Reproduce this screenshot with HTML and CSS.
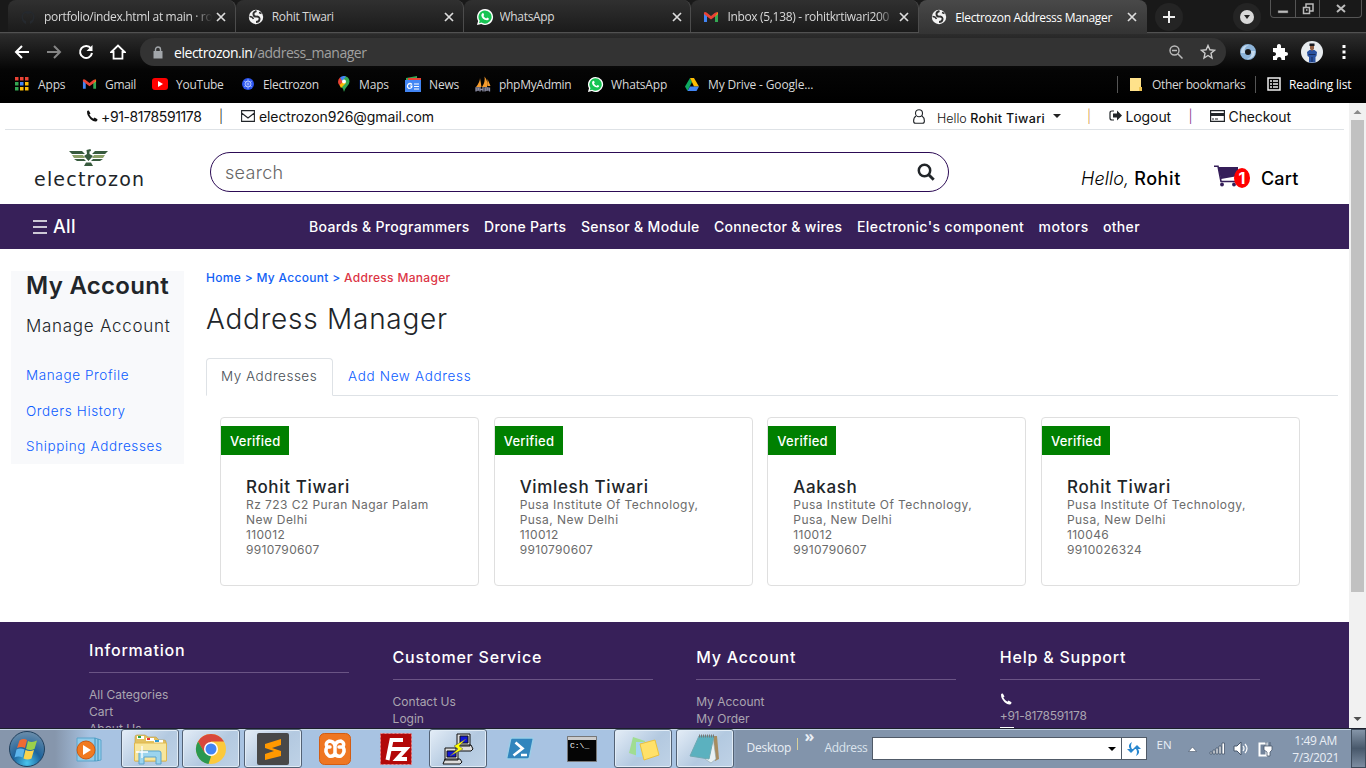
FILE: index.html
```html
<!DOCTYPE html>
<html lang="en">
<head>
<meta charset="utf-8">
<title>Electrozon Addresss Manager</title>
<link rel="stylesheet" href="styles.css">
</head>
<body>
<svg class="defs" width="0" height="0">
  <symbol id="x" viewBox="0 0 10 10"><path d="M1 1l8 8M9 1L1 9" stroke="currentColor" stroke-width="1.7"/></symbol>
  <symbol id="globe" viewBox="0 0 16 16"><circle cx="8" cy="8" r="7.2" fill="#f4f4f4"/><path d="M8.500 2Q5 3 5.500 5.500T9 7.500q3 .5 2.500 3T8 13" fill="none" stroke="#303030" stroke-width="1.900"/><path d="M1.500 7.500q3 0 4 2.500M11 3.500l2.500 1" fill="none" stroke="#303030" stroke-width="1.500"/></symbol>
  <symbol id="wa" viewBox="0 0 18 18"><path d="M9 1a8 8 0 1 1-3.800 15L1 17l1.100-4A8 8 0 0 1 9 1z" fill="#fff"/><path d="M9 2.400a6.600 6.600 0 1 1-3.500 12.200l-2.500.6.7-2.400A6.600 6.600 0 0 1 9 2.400z" fill="#17c453"/><path d="M6.500 5l1 .2.700 1.800-.8 1q1 1.900 2.800 2.500l1-1 1.700.9q0 1.800-2 1.900Q6 11.600 5.300 7.500q0-1.500 1.200-2.500z" fill="#fff"/></symbol>
  <symbol id="gmail" viewBox="0 0 16 12"><path d="M1 11V2l3 2.300V11z" fill="#4285f4"/><path d="M15 11V2l-3 2.300V11z" fill="#34a853"/><path d="M12 4.300L14.200 1q1 .5.800 2L12 5.500z" fill="#fbbc04"/><path d="M1 1.500Q2 .5 3.500 1.500L8 5l4-3.200q2-1 3 0L12 5.500 8 8.500 4 5.500 1 3z" fill="#ea4335"/></symbol>
  <symbol id="phone" viewBox="0 0 12 12"><path d="M1 1.500Q1 .5 2.800.500L4.500 3.500 3.300 4.600Q4.700 7.500 7.400 8.700L8.500 7.500l3 1.700q0 1.800-1.300 2.200-2.200.700-5.600-2.200Q1 5.600 1 1.500z" fill="currentColor"/></symbol>
  <symbol id="search" viewBox="0 0 18 18"><circle cx="7.500" cy="7.500" r="5.700" fill="none" stroke="currentColor" stroke-width="2.500"/><path d="M11.700 11.700l5 5" stroke="currentColor" stroke-width="2.900"/></symbol>
</svg>

<header class="chrome">
  <div class="tabstrip">
    <div class="tab"><svg class="fav dim" viewBox="0 0 16 16"><path d="M6 15q-5-2-4.500-8.500Q3 2 8 2t6.500 4.500Q15 13 10 15v-3q3-.5 3-4t-2-4L8 5 5 4Q3 5 3 8t3 4z" fill="currentColor"/></svg><span class="title fade">portfolio/index.html at main · ro</span><svg class="close"><use href="#x"/></svg></div>
    <div class="tab"><svg class="fav"><use href="#globe"/></svg><span class="title">Rohit Tiwari</span><svg class="close"><use href="#x"/></svg></div>
    <div class="tab"><svg class="fav big"><use href="#wa"/></svg><span class="title">WhatsApp</span><svg class="close"><use href="#x"/></svg></div>
    <div class="tab"><svg class="fav"><use href="#gmail"/></svg><span class="title fade inbox">Inbox (5,138) - rohitkrtiwari200</span><svg class="close"><use href="#x"/></svg></div>
    <div class="tab active"><svg class="fav"><use href="#globe"/></svg><span class="title">Electrozon Addresss Manager</span><svg class="close"><use href="#x"/></svg></div>
    <div class="round newtab"><svg width="14" height="14"><path d="M7 1v12M1 7h12" stroke="#eee" stroke-width="2"/></svg></div>
    <div class="round tabsearch"><svg width="14" height="14"><circle cx="7" cy="7" r="7" fill="#d9d9d9"/><path d="M4 5h6l-3 4z" fill="#222"/></svg></div>
    <div class="winctl">
      <span><svg width="12" height="14"><path d="M1 8.500h10v2.500H1z" fill="#bbb" stroke="#555" stroke-width=".5"/></svg></span>
      <span><svg width="12" height="12"><path d="M4 4V1h7v7H8M1.500 4.500h6v6h-6zM4 7h1.500" fill="none" stroke="#bbb" stroke-width="1.500"/></svg></span>
      <span class="wx"><svg width="10" height="9"><path d="M1 1l8 7M9 1L1 8" stroke="#bbb" stroke-width="2"/></svg></span>
    </div>
  </div>
  <div class="toolbar">
    <svg class="tb" viewBox="0 0 16 16"><path d="M15 8H2M8 2L2 8l6 6" fill="none" stroke="#fff" stroke-width="2"/></svg>
    <svg class="tb" viewBox="0 0 16 16"><path d="M1 8h13M8 2l6 6-6 6" fill="none" stroke="#858585" stroke-width="2"/></svg>
    <svg class="tb" viewBox="0 0 16 16"><path d="M13 4.500A6 6 0 1 0 14 9" fill="none" stroke="#fff" stroke-width="2"/><path d="M14.500 1v6h-6z" fill="#fff"/></svg>
    <svg class="tb" viewBox="0 0 18 18"><path d="M1.500 9L9 1.800 16.500 9H14v7.500H4V9z" fill="none" stroke="#fff" stroke-width="2"/></svg>
    <div class="omni">
      <svg width="10" height="13" viewBox="0 0 10 13"><path d="M.5 5h9v7.500h-9z" fill="#a2a6aa"/><path d="M2.500 6V3.500a2.500 2.500 0 0 1 5 0V6" fill="none" stroke="#a2a6aa" stroke-width="1.400"/></svg>
      <span class="url"><b>electrozon.in</b>/address_manager</span>
      <svg class="mag" width="14" height="14" viewBox="0 0 14 14"><circle cx="5.500" cy="5.500" r="4.500" fill="none" stroke="#bbb" stroke-width="1.400"/><path d="M3 5.500h5M9 9l4.500 4.500" stroke="#bbb" stroke-width="1.500"/></svg>
      <svg width="16" height="16" viewBox="0 0 16 16"><path d="M8 1.500l1.900 4.300 4.600.5L11 9.300l1 4.700-4-2.500L4 14l1-4.700L1.500 6.300l4.600-.5z" fill="none" stroke="#ccc" stroke-width="1.400"/></svg>
    </div>
    <svg class="ext" width="16" height="16"><circle cx="8" cy="8" r="5.500" fill="none" stroke="#8db4d9" stroke-width="5"/><path d="M1 9Q1 1 9 1q-6 2-4 8M15 7q0 8-8 8 6-2 4-8" fill="#dce9f6" opacity=".7"/></svg>
    <svg class="puz" width="16" height="16"><path d="M1 4h4Q4.500 0 7 0t2 4h4v4q3-.5 3 1.800T13 12v4H9.500q0-3-2.300-3T5 16H1v-4q3 0 3-2T1 8z" fill="#fff"/></svg>
    <svg class="avatar" width="22" height="22"><circle cx="11" cy="11" r="11" fill="#e8ecef"/><path d="M6.500 15L6 11l2.500-2h5l2.500 2-.5 4-1 1v5.500H8V16z" fill="#2a52a0"/><path d="M9 4h4v4l-2 2-2-2z" fill="#936044"/><path d="M8.500 5V2.500h5V5z" fill="#17191f"/><path d="M7.500 13.500h7M11 16v5" stroke="#172b58"/></svg>
    <svg class="dots" width="4" height="14"><path d="M.5 0h3v3h-3zM.5 5.500h3v3h-3zM.5 11h3v3h-3z" fill="#fff"/></svg>
  </div>
  <div class="bookmarks">
    <div class="bm b1"><svg width="14" height="14"><path d="M0 0h3.500v3.500H0zM5 0h3.500v3.500H5zM10 0h3.500v3.500H10z" fill="#ea4335"/><path d="M0 5h3.500v3.500H0zM0 10h3.500v3.500H0z" fill="#34a853"/><path d="M5 5h3.500v3.500H5z" fill="#4285f4"/><path d="M5 10h3.500v3.500H5zM10 5h3.500v3.500H10zM10 10h3.500v3.500H10z" fill="#fbbc04"/></svg>Apps</div>
    <div class="bm b2"><svg width="15" height="12"><use href="#gmail"/></svg>Gmail</div>
    <div class="bm b3"><svg width="16" height="12"><rect width="16" height="12" rx="3" fill="red"/><path d="M6 3l5 3-5 3z" fill="#fff"/></svg>YouTube</div>
    <div class="bm b4"><svg width="12" height="12"><circle cx="6" cy="6" r="6" fill="#2c55ef"/><circle cx="6" cy="6" r="3" fill="none" stroke="#b9cbff"/><path d="M2 3l8 6M2 9l8-6M6 1v10" stroke="#a9bfff" stroke-width=".7"/></svg>Electrozon</div>
    <div class="bm b5"><svg width="12" height="16"><path d="M6 0a5.500 5.500 0 0 1 5.500 5.500Q11.500 8 9 10.500 7 12.500 6 16 5.500 12.500 2.500 10z" fill="#34a853"/><path d="M0 6a6 6 0 0 1 2-4.500L6 6 2 9.500Q0 8 0 6z" fill="#ea4335"/><path d="M2 1.500A6 6 0 0 1 8 .4L4 5z" fill="#4285f4"/><path d="M1.500 9L6 5l2 2-5 5z" fill="#fbbc04"/><circle cx="6" cy="5.500" r="2" fill="#fff"/></svg>Maps</div>
    <div class="bm b6"><svg width="16" height="16"><path d="M1 2l11-2v5H1z" fill="#34a853"/><path d="M3 2h13v4H3z" fill="#ea4335"/><path d="M0 4h16v12H0z" fill="#4285f4"/><path d="M7 8.500Q5 6.500 3 8.500 1.500 11 4 12.500q3 0 3-2.500H5M9 8h5M9 10.500h5M9 13h5" fill="none" stroke="#fff" stroke-width="1.200"/></svg>News</div>
    <div class="bm b7"><svg width="16" height="16"><path d="M1 11Q5 6 5 2l1.500 9zM7 11q3.500-5 2.500-10.500 4 5 2.500 10.500zM12.500 10V3l3 7z" fill="#f49b2d"/><path d="M1 15.500V12h2.500v2H1M5 15.500V11v2.500h3V11v4.500M10 15.500V12h3v2h-3M14.500 15.500v-4" fill="none" stroke="#8d8ea6" stroke-width="1.300"/></svg>phpMyAdmin</div>
    <div class="bm b8"><svg width="17" height="17"><use href="#wa"/></svg>WhatsApp</div>
    <div class="bm b9"><svg width="14" height="13"><path d="M5 0L0 8.500 2.500 13 7 4z" fill="#0ea960"/><path d="M5 0h4l5 8.500H9z" fill="#fbbc04"/><path d="M5 8.500h9L11.500 13h-9z" fill="#4285f4"/></svg>My Drive - Google...</div>
    <div class="bm b10"><svg width="12" height="15"><path d="M0 1h11v9.500L12 14H0z" fill="#ffe28b"/><path d="M9 10h3v4H9z" fill="#efc451"/></svg>Other bookmarks</div>
    <div class="bm b11"><svg width="14" height="14"><path d="M1 1h12v12H1z" fill="none" stroke="#eee" stroke-width="1.500"/><path d="M3 4h2M6 4h5M3 7h2M6 7h5M3 10h2M6 10h5" stroke="#eee" stroke-width="1.400"/></svg>Reading list</div>
  </div>
</header>

<div class="viewport">
  <div class="site">
    <div class="topbar">
      <svg class="ic ph"><use href="#phone"/></svg><span class="tphone">+91-8178591178</span><span class="bar1">|</span>
      <svg class="env" width="14" height="12"><path d="M.6.600h12.800v10.800H.600zM.6 3l6.400 5 6.400-5" fill="none" stroke="#212529" stroke-width="1.100"/></svg><span class="tmail">electrozon926@gmail.com</span>
      <svg class="usr" width="12" height="15"><path d="M3 7Q.6 8.500.600 12q0 2.300 2 2.300h6.800q2 0 2-2.300 0-3.500-2.400-5" fill="none" stroke="#212529" stroke-width="1.100"/><circle cx="6" cy="4.200" r="3.500" fill="none" stroke="#212529" stroke-width="1.100"/></svg>
      <span class="thello">Hello <b>Rohit Tiwari</b></span><i class="caret"></i><span class="bar2">|</span>
      <svg class="out" width="13" height="12"><path d="M5 1H3Q1 1 1 3v5q0 2 2 2h2" fill="none" stroke="#212529" stroke-width="1.200"/><path d="M4 3.500h4V.5l5 5L8 10.500v-3H4z" fill="#212529"/></svg><span class="tlog">Logout</span><span class="bar3">|</span>
      <svg class="card-i" width="15" height="12"><path d="M.6.600h13.800v10.800H.600z" fill="none" stroke="#212529" stroke-width="1.200"/><path d="M0 3h15v3H0zM2 8.500h2v1H2zM5 8.500h3v1H5z" fill="#212529"/></svg><span class="tcheck">Checkout</span>
    </div>
    <div class="brandrow">
      <div class="logo">
        <svg width="39" height="18" viewBox="0 0 39 18"><path d="M0 2h13l3 3h-13zM39 2H26l-3 3h13zM5 10h10l2 2H8zM34 10H24l-2 2h9zM17.500 1l4-1 .5 2-1.500.5V5L24 7l-4.500 5L15 7l3-2zM17 13.500h5l2 3.500h-9z" fill="#375a3d"/><path d="M3 6h11l2 3H5zM36 6H25l-2 3h11z" fill="#8ba068"/></svg>
        <span>electrozon</span>
      </div>
      <div class="searchbox"><span>search</span><svg width="18" height="18"><use href="#search"/></svg></div>
      <span class="hello"><i>Hello,</i> <b>Rohit</b></span>
      <div class="cart"><svg width="24" height="22"><path d="M4 2h20v9L7 14z" fill="#351e59"/><path d="M0 1.200h4l3 15.300h16" fill="none" stroke="#351e59" stroke-width="1.600"/><circle cx="8" cy="19.500" r="1.900" fill="#351e59"/><circle cx="20" cy="19.500" r="1.900" fill="#351e59"/></svg><span class="count">1</span></div>
      <b class="cartlabel">Cart</b>
    </div>
    <nav class="nav"><div class="all"><svg width="14" height="14"><path d="M0 1h14M0 7h14M0 13h14" stroke="#fff" stroke-width="1.300"/></svg><span>All</span></div>
      <a class="n1">Boards &amp; Programmers</a><a class="n2">Drone Parts</a><a class="n3">Sensor &amp; Module</a><a class="n4">Connector &amp; wires</a><a class="n5">Electronic's component</a><a class="n6">motors</a><a class="n7">other</a></nav>
    <div class="content">
      <aside class="side"><h2>My Account</h2><h4>Manage Account</h4><a class="s1">Manage Profile</a><a class="s2">Orders History</a><a class="s3">Shipping Addresses</a></aside>
      <main class="main">
        <div class="crumb">Home &gt; My Account &gt; <span>Address Manager</span></div>
        <h1>Address Manager</h1>
        <div class="tabs"><div class="on"><span>My Addresses</span></div><a>Add New Address</a></div>
        <div class="cards">
          <article><span class="badge">Verified</span><h3>Rohit Tiwari</h3><p>Rz 723 C2 Puran Nagar Palam</p><p>New Delhi</p><p class="num">110012</p><p class="num">9910790607</p></article>
          <article><span class="badge">Verified</span><h3>Vimlesh Tiwari</h3><p>Pusa Institute Of Technology,</p><p>Pusa, New Delhi</p><p class="num">110012</p><p class="num">9910790607</p></article>
          <article><span class="badge">Verified</span><h3>Aakash</h3><p>Pusa Institute Of Technology,</p><p>Pusa, New Delhi</p><p class="num">110012</p><p class="num">9910790607</p></article>
          <article><span class="badge">Verified</span><h3>Rohit Tiwari</h3><p>Pusa Institute Of Technology,</p><p>Pusa, New Delhi</p><p class="num">110046</p><p class="num">9910026324</p></article>
        </div>
      </main>
    </div>
    <footer class="footer">
      <section class="first"><h5>Information</h5><p>All Categories</p><p>Cart</p><p>About Us</p></section>
      <section><h5>Customer Service</h5><p>Contact Us</p><p>Login</p></section>
      <section><h5>My Account</h5><p>My Account</p><p>My Order</p></section>
      <section class="help"><h5>Help &amp; Support</h5><svg width="12" height="12"><use href="#phone"/></svg><p class="num">+91-8178591178</p><i class="peek"></i></section>
    </footer>
  </div>
  <div class="scroll"><svg width="17" height="17"><path d="M4.500 11h8l-4-4z" fill="#8a8a8a"/></svg><i></i><svg width="17" height="17"><path d="M4.500 6h8l-4 4z" fill="#505050"/></svg></div>
</div>

<div class="taskbar">
  <div class="t start"><svg width="38" height="38" viewBox="0 0 38 38"><defs><radialGradient id="orb" cx=".5" cy=".9" r=".9"><stop offset="0" stop-color="#49c5ee"/><stop offset=".45" stop-color="#1d639c"/><stop offset="1" stop-color="#6d8eaa"/></radialGradient></defs><circle cx="19" cy="19" r="17.500" fill="url(#orb)" stroke="#20405e"/><path d="M11.500 10.500q4-2.500 7.500-.5l-2 8q-4-2-8 0z" fill="#ef6a33"/><path d="M20 11q4 2 9-.5l-2.500 8.500q-4 2-8.500 0z" fill="#9bd04a"/><path d="M8.500 19.500q4-2 8 0l-2 8q-4-2-8 0z" fill="#5db5ec"/><path d="M17.500 20q4 2 8.500 0l-2.500 8.500q-4 2-8 0z" fill="#fbd44e"/></svg></div>
  <div class="t media"><svg width="32" height="28" viewBox="0 0 32 28"><path d="M4 3h18l6 2v20l-5 1H4z" fill="#91cbe9" stroke="#5ba4ca"/><path d="M22 3v23M25 4v22" stroke="#3b91ba"/><circle cx="13" cy="15" r="9" fill="#f17a20" stroke="#ce5a11"/><path d="M10 10l8 5-8 5z" fill="#fff"/></svg></div>
  <div class="t btn"><svg width="36" height="34" viewBox="0 0 36 34"><path d="M3 5q0-2 2-2h8l3 2h8l3 3h5q2 0 2 2v19H3z" fill="#e3c160" stroke="#b89a46" stroke-width=".6"/><path d="M5 4h7v3H5zM14 6h8v3h-8zM22 8h9v3h-9z" fill="#fff"/><path d="M6 4h3v2H6z" fill="#26a449"/><path d="M15 6h3v2h-3z" fill="#e33"/><path d="M23 8h4v2h-4z" fill="#39c"/><path d="M2.500 11h32v18h-32z" fill="#f8e69c" stroke="#dfb84f"/><path d="M7 32V21q0-2 2-2h18q2 0 2 2v11h-5v-7H12v7z" fill="#9bd4ee" stroke="#5ba3cb"/><path d="M10 14v12M4 20h12" stroke="#fff" stroke-width="1.300"/></svg></div>
  <div class="t btn"><svg width="32" height="32" viewBox="0 0 32 32"><circle cx="16" cy="16" r="15" fill="#fbc93c"/><path d="M3 8.500A15 15 0 0 1 29 8.500H16L9.500 20z" fill="#d8483c"/><path d="M3 8.500L9.500 19.500 16 23.500 13.500 31A15 15 0 0 1 3 8.500z" fill="#2b9850"/><circle cx="16" cy="16" r="7" fill="#fff"/><circle cx="16" cy="16" r="5.500" fill="#4285f4"/></svg></div>
  <div class="t btn"><svg width="32" height="32"><rect width="32" height="32" rx="2" fill="#484848"/><path d="M8 11l16-5v6l-9 3 9 3v5L8 27v-6l9-3-9-3z" fill="#ff9800"/></svg></div>
  <div class="t"><svg width="32" height="32"><rect x=".5" y=".5" width="31" height="31" rx="5" fill="#ef7622" stroke="#d35d13"/><path d="M16 13Q15 8 10 8q-4 2-2 6h3-3q-3 5 2 9 5 1 6-3V13q1-5 6-5 4 2 2 6h-4 4q3 5-2 9-5 1-6-3" fill="none" stroke="#fff" stroke-width="3.500" stroke-linejoin="round"/></svg></div>
  <div class="t"><svg width="32" height="32"><rect x=".5" y=".5" width="31" height="31" fill="#b30808" stroke="#e88" stroke-dasharray="2 2"/><path d="M7.500 27l4-20H23M9.500 16h8M16 16h10l-9 10h10" fill="none" stroke="#fff" stroke-width="4"/></svg></div>
  <div class="t btn"><svg width="34" height="34" viewBox="0 0 34 34"><g stroke="#111" fill="#ddd"><path d="M16 2h13v12H16zM4 16h13v12H4zM15 13h15l2 4-2 2H15zM4 27h15l2 3-2 2H2z"/><path d="M19 4h8v7h-8zM6 19h9v6H6z" fill="#1016d8"/></g><path d="M25 7L13 14l4 3-8 7 13-7-4-3z" fill="#ff0" stroke="#555" stroke-width=".5"/></svg></div>
  <div class="t"><svg width="30" height="26" viewBox="0 0 30 26"><path d="M7 2h20q1.500 0 1 2l-3.500 17q-.5 2-2 2H3q-1.500 0-1-2L5.500 4q.3-2 1.500-2z" fill="#3185bd" stroke="#9bcee8" stroke-width="1.300"/><path d="M10.500 6.500l7 6-9 7M16 19h6" fill="none" stroke="#fff" stroke-width="2.700"/></svg></div>
  <div class="t"><svg class="cmd" width="30" height="26" viewBox="0 0 30 26"><path d="M.5.500h29v25H.500z" fill="#050505" stroke="#777"/><path d="M1 1h28v3H1z" fill="#ccc"/><text x="3" y="12">C:\_</text></svg></div>
  <div class="t btn"><svg width="34" height="30" viewBox="0 0 34 30"><path d="M7 3l12 4-4 16-12-4z" fill="#a0dd92"/><path d="M10 8h14v15H10z" fill="#a4d3f2"/><path d="M14 10l15-4 4 15-15 5z" fill="#ffe16a" stroke="#e9c13f"/></svg></div>
  <div class="t btn"><svg width="34" height="32" viewBox="0 0 34 32"><path d="M25 3h4l2 23-4 2z" fill="#a88c5e"/><path d="M25 4l3 22-5 4-6-4z" fill="#e9f1f3" stroke="#8fa4ab" stroke-width=".6"/><path d="M11 3h15l-5 23-19-3z" fill="#5bb1bf" stroke="#6fa9b2"/><path d="M11 3h16" stroke="#777" stroke-dasharray="1 1" stroke-width="3"/></svg></div>
  <span class="desk">Desktop</span><i class="grip"></i><span class="chev">»</span><span class="addr">Address</span>
  <div class="combo"><i></i></div><div class="go"><svg width="16" height="16"><path d="M6 1Q1 4 4 8H1l4 4 4-4H6Q4 5 6 1zM10 15q5-3 2-7h3l-4-4-4 4h3q2 3 0 7z" fill="#2987cf"/></svg></div>
  <span class="en">EN</span>
  <svg class="up" width="9" height="6"><path d="M.5 5.500L4.500 1l4 4.500z" fill="#fff" stroke="#465468" stroke-width=".6"/></svg>
  <svg class="sig" width="17" height="13"><path d="M1 10h2v2H1zM4 8h2v4H4zM7 6h2v6H7zM10 4h2v8h-2zM13 1h2.500v11H13z" fill="#fff" stroke="#47566b" stroke-width=".8"/></svg>
  <svg class="vol" width="16" height="15"><path d="M1 5h3l4-4v13L4 10H1z" fill="#fff" stroke="#47566b"/><path d="M10 5q2 2.500 0 5M12 3q4 4.500 0 9" fill="none" stroke="#fff" stroke-width="1.200"/></svg>
  <svg class="pow" width="15" height="16"><path d="M1.500 2.500h7v12h-7z" fill="#73849b" stroke="#fff" stroke-width="2"/><path d="M6 5h8v4l-2 2v4H9v-4L6 9zM8 5V1M12 5V1" fill="#fff" stroke="#47566b" stroke-width=".8"/></svg>
  <div class="clock">1:49 AM<br>7/3/2021</div><div class="showdesk"></div>
</div>
</body>
</html>
```
FILE: styles.css
```css
* { box-sizing: border-box; }
html, body { margin: 0; height: 100%; overflow: hidden; }
body { width: 1366px; height: 768px; display: flex; flex-direction: column; font-family: "Open Sans", sans-serif; background: #fff; }
svg { display: block; flex: none; }
.defs { position: absolute; }
span, a, b { white-space: nowrap; }
h1, h2, h3, h4, h5, p { margin: 0; white-space: nowrap; }

/* browser frame */
.chrome { height: 103px; flex: none; background: linear-gradient(#3c3c3c 33px, #2c2c2c 34px, #050505 70px, #000 100px); color: #d8d8d8; font-size: 12px; }
.tabstrip { height: 33px; display: flex; background: #191919; padding-left: 8px; border-bottom: 1px solid #515151; }
.tab { width: 227.8px; height: 32px; display: flex; align-items: center; padding: 1px 0 0 12px; background: linear-gradient(#303030, #1b1b1b); border-radius: 8px 8px 0 0; border-right: 1px solid #4c4c4c; }
.tab.active { height: 33px; background: linear-gradient(#494949, #343434); border: 0; color: #fff; }
.fav { width: 16px; height: 16px; margin-right: 8px; }
.fav.big { width: 18px; height: 18px; margin-right: 6px; }
.dim { color: #25292e; }
.title { width: 172px; overflow: hidden; letter-spacing: -.33px; }
.title.fade { -webkit-mask-image: linear-gradient(90deg, #000 150px, transparent 168px); }
.close { width: 10px; height: 10px; color: #ddd; }
.round { width: 28px; height: 28px; border-radius: 50%; background: #242424; display: flex; align-items: center; justify-content: center; margin-top: 3px; }
.newtab { margin-left: 8px; }
.tabsearch { margin-left: 50px; }
.winctl { display: flex; margin-left: 9px; height: 18px; width: 92px; border: 1px solid #555; border-top: 0; border-radius: 0 0 4px 4px; }
.winctl span { width: 25px; display: flex; align-items: center; justify-content: center; border-right: 1px solid #555; }
.winctl .wx { width: 41px; border: 0; }
.toolbar { height: 38px; display: flex; align-items: center; padding-left: 14px; }
.tb { width: 16px; height: 16px; margin-right: 16px; }
.omni { width: 1086px; height: 28px; border-radius: 14px; background: #333; display: flex; align-items: center; padding-left: 13px; margin-left: -2px; }
.url { margin-left: 11px; width: 995px; font-size: 14px; color: #a0a0a0; letter-spacing: -.46px; }
.url b { font-weight: 400; color: #fff; }
.mag { margin-right: 17px; }
.ext { margin-left: 14px; } .puz { margin-left: 16px; } .avatar { margin-left: 13px; } .dots { margin-left: 19px; }
.bookmarks { height: 26px; display: flex; align-items: center; padding-left: 15px; }
.bm { display: flex; align-items: center; letter-spacing: -.15px; white-space: nowrap; }
.bm svg { margin-right: 8px; }
.b1 { width: 67px; } .b1 svg { margin-right: 9px; }
.b2 { width: 70px; letter-spacing: -.3px; }
.b3 { width: 90px; letter-spacing: -.25px; }
.b4 { width: 96px; letter-spacing: -.3px; } .b4 svg { margin-right: 9px; }
.b5 { width: 67px; } .b5 svg { margin-right: 9px; }
.b6 { width: 70px; }
.b7 { width: 112px; letter-spacing: -.3px; }
.b8 { width: 98px; } .b8 svg { margin-right: 7px; }
.b9 { width: 432px; } .b9 svg { margin-right: 9px; }
.b10 { width: 138px; border-left: 1px solid #555; padding-left: 12px; letter-spacing: -.35px; } .b10 svg { margin-right: 10px; }
.b11 { border-left: 1px solid #555; padding-left: 11px; color: #fff; }

/* page */
.viewport { height: 625px; flex: none; display: flex; overflow: hidden; font-family: Inter, sans-serif; color: #212529; }
.site { width: 1349px; overflow: hidden; }
.scroll { width: 17px; background: #f1f1f1; display: flex; flex-direction: column; align-items: center; }
.scroll i { width: 13px; height: 472px; flex: none; background: #c1c1c1; margin-bottom: 119px; }
.topbar { height: 27px; margin: 0 5px; border-bottom: 1px solid #dee2e6; display: flex; align-items: center; padding-left: 81px; color: #111; font-size: 14px; }
.topbar > span { flex: none; }
.ph { width: 12px; height: 12px; margin-right: 3px; }
.tphone { width: 118px; letter-spacing: -.38px; }
.bar1 { width: 22px; } .env { margin-right: 4px; }
.tmail { width: 654px; letter-spacing: -.1px; }
.usr { margin-right: 12px; }
.thello { width: 116px; font-size: 12.5px; font-weight: 300; padding-top: 4px; }
.thello b { font-weight: 500; letter-spacing: .35px; }
.caret { border: 4px solid transparent; border-top-color: #222; border-bottom: 0; margin-right: 26px; }
.bar2 { width: 21.500px; color: #d4923c; } .out { margin-right: 4px; } .tlog { width: 63px; letter-spacing: -.1px; }
.bar3 { width: 21px; color: #7b2683; } .card-i { margin-right: 4px; }
.tcheck { letter-spacing: -.1px; }
.topbar .bar1, .topbar .bar2, .topbar .bar3 { font-weight: 300; font-size: 13px; }
.brandrow { height: 74px; display: flex; align-items: flex-start; padding: 0 0 0 34px; }
.logo { width: 176px; padding-top: 19px; font-family: "DejaVu Sans", sans-serif; font-size: 19px; line-height: 24px; }
.logo svg { margin-left: 35px; }
.logo span { letter-spacing: 1.200px; }
.searchbox { width: 739px; height: 40px; margin-top: 22px; border: 1px solid #2c0b55; border-radius: 20px; display: flex; justify-content: space-between; align-items: center; padding: 0 13px 0 14px; font-size: 18px; font-weight: 300; color: #666; letter-spacing: .3px; }
.searchbox svg { color: #212529; }
.hello { width: 133px; margin: 35px 0 0 132px; font-size: 18px; line-height: 28px; font-weight: 300; color: #000; letter-spacing: .05px; }
.hello b { font-weight: 500; letter-spacing: .6px; }
.cart { position: relative; width: 47px; margin-top: 35px; }
.count { position: absolute; left: 20px; top: 3px; width: 16px; height: 20px; border-radius: 50%; background: red; color: #fff; font-size: 16px; font-weight: 700; line-height: 20px; text-align: center; }
.cartlabel { margin-top: 35px; font-size: 18px; line-height: 28px; font-weight: 500; color: #000; letter-spacing: .15px; }
.nav { height: 45px; background: #372059; color: #fff; display: flex; align-items: center; padding-left: 33px; font-size: 14px; font-weight: 500; letter-spacing: .32px; }
.all { width: 276px; display: flex; align-items: center; gap: 6px; font-size: 18px; }
.nav a { flex: none; }
.n1 { width: 175px; } .n2 { width: 97px; } .n3 { width: 133px; } .n4 { width: 143px; } .n5 { width: 181.500px; letter-spacing: .42px; } .n6 { width: 64.500px; letter-spacing: .55px; }
.content { height: 373px; display: flex; padding: 22px 11px 0; }
.side { width: 173px; height: 193px; background: #f8f9fb; padding-left: 15px; margin-right: 22px; display: flex; flex-direction: column; }
.side h2 { font-size: 24px; line-height: 30px; font-weight: 600; letter-spacing: .3px; }
.side h4 { font-size: 17px; line-height: 24px; font-weight: 300; margin: 13px 0 27px; letter-spacing: .72px; }
.side a { font-size: 13.500px; line-height: 20px; font-weight: 300; color: #0d5cff; margin-bottom: 15.500px; letter-spacing: .62px; }
.main { width: 1132px; }
.crumb { font-size: 12px; line-height: 14px; font-weight: 500; color: #1261f5; letter-spacing: .31px; }
.crumb span { color: #dc3545; }
.main h1 { margin-top: 16px; font-size: 28px; line-height: 36px; font-weight: 300; letter-spacing: .75px; }
.tabs { display: flex; height: 38px; margin-top: 21px; border-bottom: 1px solid #dee2e6; font-size: 13.500px; font-weight: 300; line-height: 37px; letter-spacing: .66px; }
.tabs .on { width: 127px; height: 38px; border: 1px solid #dee2e6; border-bottom-color: #fff; border-radius: 4px 4px 0 0; padding-left: 14px; color: #495057; line-height: 35px; letter-spacing: .52px; }
.tabs a { margin-left: 15px; color: #0d5cff; }
.cards { margin: 21px 38px 0 14px; display: grid; grid-template-columns: repeat(4, 259px); justify-content: space-between; }
article { height: 169px; border: 1px solid #dfdfdf; border-radius: 4px; padding-top: 8px; }
.badge { display: block; width: 68px; height: 29px; line-height: 30px; background: green; color: #fff; font-size: 13px; font-weight: 500; padding-left: 9px; letter-spacing: .25px; }
article h3 { margin: 21px 0 -1px 25px; font-size: 17px; line-height: 22px; font-weight: 500; letter-spacing: .65px; }
article p { margin-left: 25px; font-size: 12px; line-height: 15px; color: #6b6b6b; letter-spacing: .44px; }
article .num { letter-spacing: .32px; }
.footer { height: 140px; background: #372059; display: grid; grid-template-columns: repeat(4, 260px); column-gap: 43.600px; padding-left: 89px; color: #fff; }
.footer section { padding-top: 24px; }
.footer .first { padding-top: 17px; }
.footer h5 { font-size: 16px; line-height: 22px; font-weight: 500; padding-bottom: 11px; border-bottom: 1px solid #6a5485; margin-bottom: 13px; letter-spacing: .78px; }
.footer p { font-size: 12px; line-height: 17px; color: #aaa5b0; }
.footer .num { letter-spacing: -.28px; }
.help svg { margin: 1px 0 2px; }
.peek { display: block; width: 14px; height: 8px; background: #fff; margin-top: 3px; }

/* desktop taskbar */
.taskbar { height: 40px; flex: none; display: flex; align-items: center; background: linear-gradient(90deg, #8696ac 0, #8696ac 55px, #a8c3e2 90px, #a8c3e2 730px, #8294ab 736px); border-top: 1px solid #1c1f2c; box-shadow: inset 0 1px #c4d4e4; color: #e9eef5; font-size: 12px; }
.t { width: 58px; height: 39px; margin-right: 3.700px; display: flex; align-items: center; justify-content: center; flex: none; }
.start { width: 54px; margin-right: 5px; }
.media { padding-left: 2px; }
.btn { border: 1px solid #536275; border-radius: 3px; background: linear-gradient(135deg, #e4edf7, #b3c9e0 55%, #bfd2e6); box-shadow: inset 0 0 0 1px #e1ecf6; }
.cmd text { font: 8px "Liberation Mono", monospace; fill: #fff; }
.desk { width: 50px; margin: -2px 0 0 9px; letter-spacing: -.25px; }
.grip { width: 1px; height: 12px; background: #d8d099; margin-bottom: 10px; }
.chev { font-size: 16px; font-weight: 700; margin: -25px 0 0 7px; width: 20px; }
.addr { width: 47px; margin-top: -2px; color: #dce4ed; letter-spacing: -.35px; }
.combo { width: 250px; height: 23px; background: #fff; border: 1px solid #505a67; display: flex; align-items: center; justify-content: flex-end; padding-right: 5px; }
.combo i { border: 4px solid transparent; border-top-color: #000; border-bottom: 0; }
.go { width: 25px; height: 23px; background: #fff; border: 1px solid #505a67; border-left: 0; display: flex; align-items: center; justify-content: center; }
.en { margin: -8px 0 0 10px; width: 31px; font-size: 11.500px; }
.up { width: 9px; } .sig { margin-left: 12px; } .vol { margin-left: 7px; } .pow { margin-left: 9px; }
.clock { margin-left: 16px; width: 54px; text-align: center; line-height: 17px; letter-spacing: -.4px; white-space: nowrap; }
.showdesk { width: 15px; height: 39px; margin-left: auto; border: 1px solid #3f4c5c; background: linear-gradient(#8595a8, #48586b 50%, #7d8da1); }
```
